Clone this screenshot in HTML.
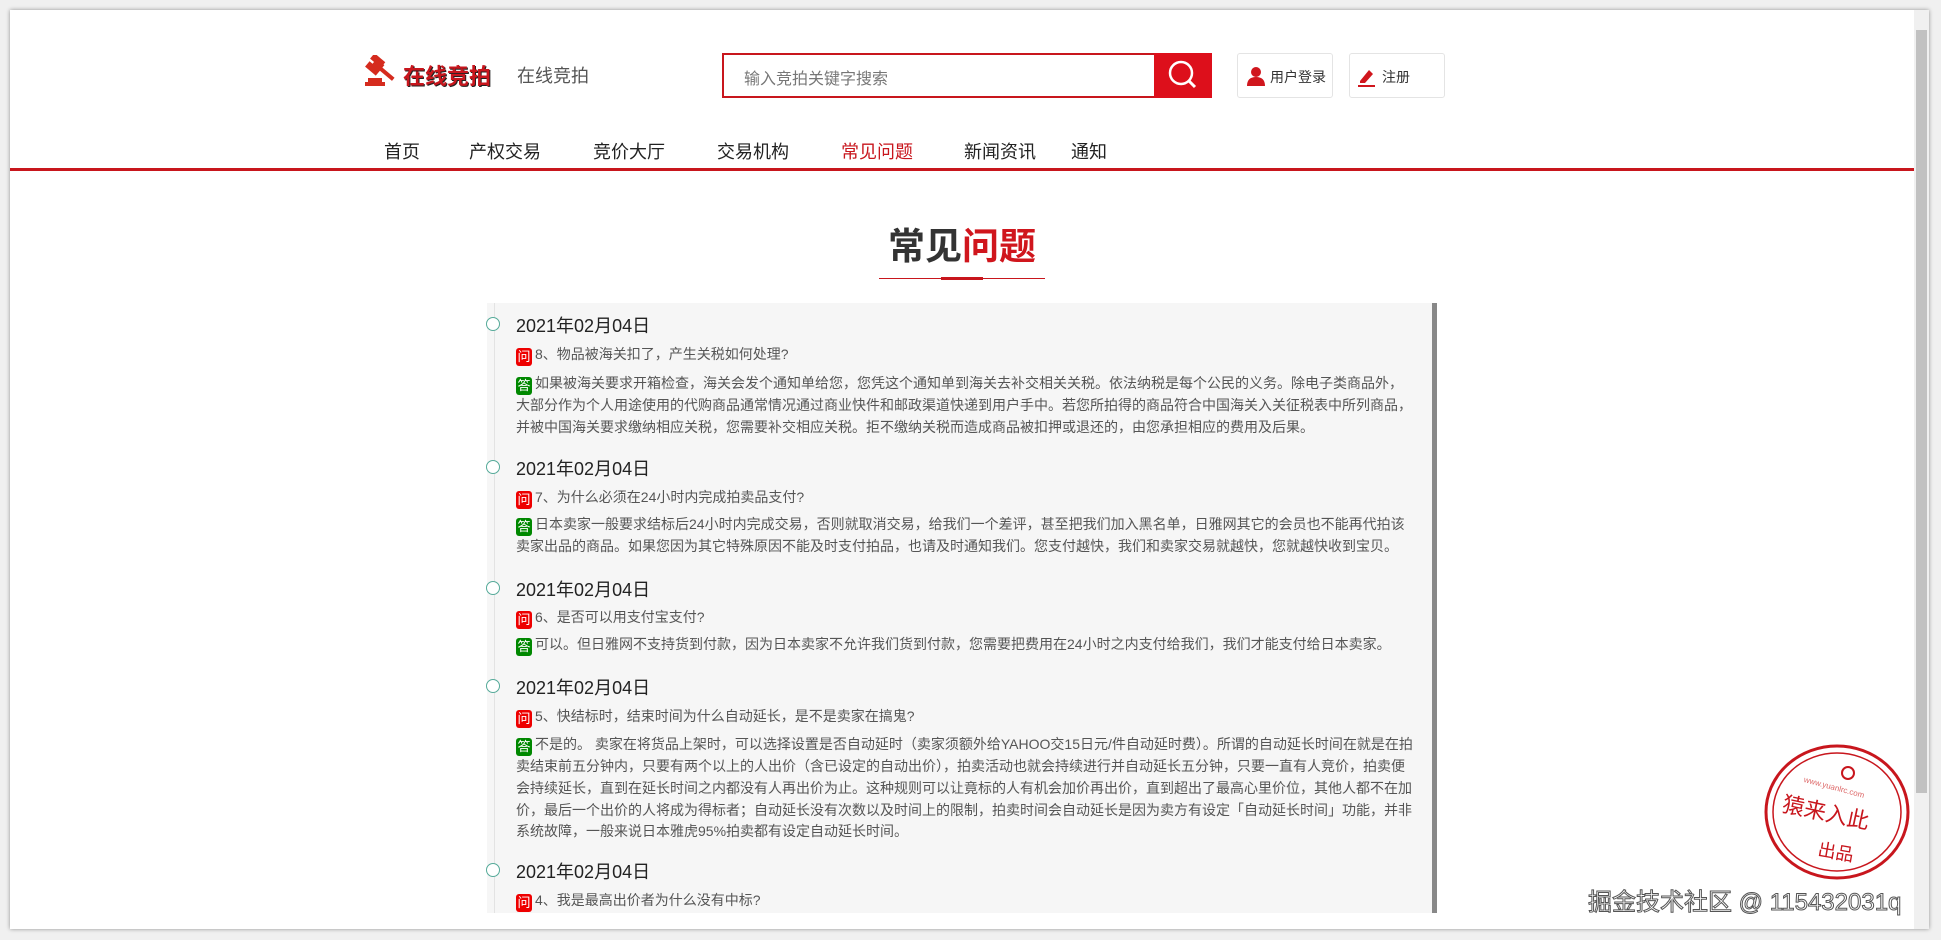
<!DOCTYPE html>
<html><head><meta charset="utf-8"><style>
*{margin:0;padding:0;box-sizing:border-box}
body{width:1941px;height:940px;background:#f0f0f0;font-family:"Liberation Sans","Noto Sans CJK SC",sans-serif;position:relative;overflow:hidden}
.frame{position:absolute;left:10px;top:10px;width:1919px;height:919px;background:#fff;box-shadow:0 0 4px rgba(0,0,0,.4);overflow:hidden}
.a{position:absolute}
.nav span{position:absolute;top:128px;font-size:18px;color:#222}
.box{position:absolute;left:477px;top:293px;width:950px;height:610px;background:#f6f6f6}
.dot{position:absolute;left:-1px;width:14px;height:14px;border:1.5px solid #5a9;border-radius:50%;background:#fff}
.date{position:absolute;left:29px;font-size:18px;color:#222}
.q,.t{position:absolute;left:29px;width:900px;font-size:14px;color:#555;line-height:21.8px}
.q i,.t i{font-style:normal;display:inline-block;width:16px;height:18px;line-height:18px;text-align:center;color:#fff;font-size:13px;border-radius:3px;margin-right:3px;vertical-align:-2px}
.q i{background:#e00}.t i{background:#080}
</style></head><body>
<div class="frame">
<svg class="a" style="left:353px;top:45px" width="40" height="36" viewBox="0 0 40 36"><g fill="#d52b1e"><rect x="8" y="2" width="14" height="7" transform="rotate(40 15 5)"/><rect x="3" y="10" width="14" height="7" transform="rotate(40 10 13)"/><rect x="10" y="6" width="10" height="9" transform="rotate(40 15 10)"/><rect x="16" y="12" width="18" height="4" transform="rotate(40 18 14)"/><rect x="2" y="27" width="20" height="4"/><rect x="5" y="23" width="14" height="4"/></g></svg>
<div class="a" style="left:393px;top:49px;font-size:22px;font-weight:bold;color:#c8161d;text-shadow:1px 1px 0 #222">在线竞拍</div>
<div class="a" style="left:507px;top:52px;font-size:18px;color:#555">在线竞拍</div>
<div class="a" style="left:712px;top:43px;width:490px;height:45px;border:2px solid #c8161d;background:#fff"><span class="a" style="left:20px;top:10px;font-size:16px;color:#777">输入竞拍关键字搜索</span></div>
<div class="a" style="left:1144px;top:43px;width:58px;height:45px;background:#dd0f1b"><svg width="58" height="45"><circle cx="27" cy="20" r="11" fill="none" stroke="#fff" stroke-width="2.5"/><line x1="35" y1="28" x2="41" y2="34" stroke="#fff" stroke-width="3"/></svg></div>
<div class="a" style="left:1227px;top:43px;width:96px;height:45px;border:1px solid #e4e4e4;border-radius:3px"><svg class="a" style="left:8px;top:12px" width="20" height="20"><circle cx="10" cy="6" r="5" fill="#d0161d"/><path d="M1 20 Q1 11 10 11 Q19 11 19 20Z" fill="#d0161d"/></svg><span class="a" style="left:32px;top:13px;font-size:14px;color:#333">用户登录</span></div>
<div class="a" style="left:1339px;top:43px;width:96px;height:45px;border:1px solid #e4e4e4;border-radius:3px"><svg class="a" style="left:7px;top:12px" width="20" height="22"><path d="M3 15 L12 4 L16 8 L8 17 L3 17Z" fill="#d0161d"/><rect x="1" y="19" width="17" height="2" fill="#d0161d"/></svg><span class="a" style="left:32px;top:13px;font-size:14px;color:#333">注册</span></div>
<div class="nav"><span style="left:374px">首页</span><span style="left:459px">产权交易</span><span style="left:583px">竞价大厅</span><span style="left:707px">交易机构</span><span style="left:831px;color:#c8161d">常见问题</span><span style="left:954px">新闻资讯</span><span style="left:1061px">通知</span></div>
<div class="a" style="left:0;top:158px;width:1904px;height:3px;background:#c8161d"></div>
<div class="a" style="left:869px;top:206px;width:166px;text-align:center;font-size:37px;font-weight:bold;color:#333">常见<span style="color:#d0161d">问题</span></div>
<div class="a" style="left:869px;top:268px;width:166px;height:1px;background:#c8161d"></div>
<div class="a" style="left:931px;top:267px;width:42px;height:3px;background:#c8161d"></div>
<div class="box">
<div class="a" style="left:7px;top:0;width:1px;height:610px;background:#e3e3e3"></div>
<div class="dot" style="top:14px"></div><div class="date" style="top:9px">2021年02月04日</div>
<div class="q" style="top:41px"><i>问</i>8、物品被海关扣了，产生关税如何处理?</div>
<div class="t" style="top:70px"><i>答</i>如果被海关要求开箱检查，海关会发个通知单给您，您凭这个通知单到海关去补交相关关税。依法纳税是每个公民的义务。除电子类商品外，大部分作为个人用途使用的代购商品通常情况通过商业快件和邮政渠道快递到用户手中。若您所拍得的商品符合中国海关入关征税表中所列商品，并被中国海关要求缴纳相应关税，您需要补交相应关税。拒不缴纳关税而造成商品被扣押或退还的，由您承担相应的费用及后果。</div>
<div class="dot" style="top:157px"></div><div class="date" style="top:152px">2021年02月04日</div>
<div class="q" style="top:184px"><i>问</i>7、为什么必须在24小时内完成拍卖品支付?</div>
<div class="t" style="top:211px"><i>答</i>日本卖家一般要求结标后24小时内完成交易，否则就取消交易，给我们一个差评，甚至把我们加入黑名单，日雅网其它的会员也不能再代拍该卖家出品的商品。如果您因为其它特殊原因不能及时支付拍品，也请及时通知我们。您支付越快，我们和卖家交易就越快，您就越快收到宝贝。</div>
<div class="dot" style="top:278px"></div><div class="date" style="top:273px">2021年02月04日</div>
<div class="q" style="top:304px"><i>问</i>6、是否可以用支付宝支付?</div>
<div class="t" style="top:331px"><i>答</i>可以。但日雅网不支持货到付款，因为日本卖家不允许我们货到付款，您需要把费用在24小时之内支付给我们，我们才能支付给日本卖家。</div>
<div class="dot" style="top:376px"></div><div class="date" style="top:371px">2021年02月04日</div>
<div class="q" style="top:403px"><i>问</i>5、快结标时，结束时间为什么自动延长，是不是卖家在搞鬼?</div>
<div class="t" style="top:431px"><i>答</i>不是的。 卖家在将货品上架时，可以选择设置是否自动延时（卖家须额外给YAHOO交15日元/件自动延时费）。所谓的自动延长时间在就是在拍卖结束前五分钟内，只要有两个以上的人出价（含已设定的自动出价），拍卖活动也就会持续进行并自动延长五分钟，只要一直有人竞价，拍卖便会持续延长，直到在延长时间之内都没有人再出价为止。这种规则可以让竟标的人有机会加价再出价，直到超出了最高心里价位，其他人都不在加价，最后一个出价的人将成为得标者；自动延长没有次数以及时间上的限制，拍卖时间会自动延长是因为卖方有设定「自动延长时间」功能，并非系统故障，一般来说日本雅虎95%拍卖都有设定自动延长时间。</div>
<div class="dot" style="top:560px"></div><div class="date" style="top:555px">2021年02月04日</div>
<div class="q" style="top:587px"><i>问</i>4、我是最高出价者为什么没有中标?</div>
<div class="a" style="left:945px;top:0;width:5px;height:610px;background:#888"></div>
</div>
<div class="a" style="left:1904px;top:0;width:15px;height:919px;background:#f0f0f0"></div>
<div class="a" style="left:1906px;top:20px;width:11px;height:763px;background:#c1c1c1"></div>
<svg class="a" style="left:1753px;top:733px" width="150" height="140"><g fill="none" stroke="#c8161d"><ellipse cx="74" cy="69" rx="71" ry="66" stroke-width="3"/><ellipse cx="74" cy="69" rx="64" ry="59" stroke-width="1.5"/></g><circle cx="85" cy="30" r="6" fill="none" stroke="#c8161d" stroke-width="2"/><text x="40" y="48" font-size="8" fill="#d66" transform="rotate(15 75 45)">www.yuanlrc.com</text><text x="18" y="80" font-size="22" fill="#c8161d" transform="rotate(12 75 75)">猿来入此</text><text x="55" y="115" font-size="18" fill="#c8161d" transform="rotate(10 70 108)">出品</text></svg>
<div class="a" style="left:1578px;top:872px;font-size:24px;color:#fff;-webkit-text-stroke:1px #555;white-space:nowrap">掘金技术社区 @ 115432031q</div>
</div>
</body></html>
